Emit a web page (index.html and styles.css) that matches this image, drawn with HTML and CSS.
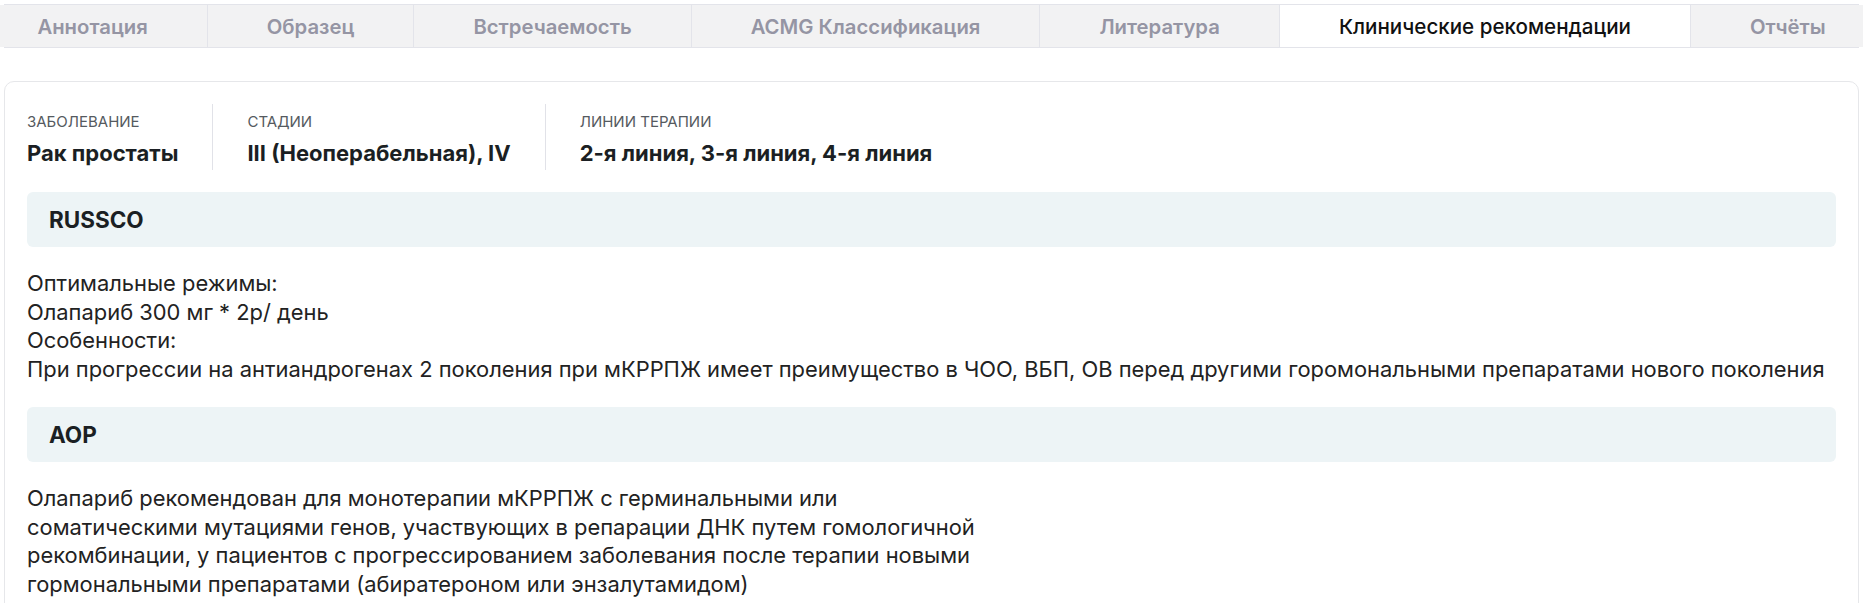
FILE: index.html
```html
<!DOCTYPE html>
<html lang="ru">
<head>
<meta charset="utf-8">
<link rel="stylesheet" href="styles.css">
</head>
<body>
<nav class="tabs">
  <div class="tab">Аннотация</div>
  <div class="tab">Образец</div>
  <div class="tab">Встречаемость</div>
  <div class="tab">ACMG Классификация</div>
  <div class="tab">Литература</div>
  <div class="tab active">Клинические рекомендации</div>
  <div class="tab">Отчёты</div>
</nav>
<main class="card">
  <div class="summary">
    <div class="field">
      <div class="label">Заболевание</div>
      <div class="value">Рак простаты</div>
    </div>
    <div class="field">
      <div class="label">Стадии</div>
      <div class="value">III (Неоперабельная), IV</div>
    </div>
    <div class="field">
      <div class="label">Линии терапии</div>
      <div class="value">2-я линия, 3-я линия, 4-я линия</div>
    </div>
  </div>
  <section class="guide">
    <h2 class="guide-title">RUSSCO</h2>
    <div class="guide-text">Оптимальные режимы:<br>Олапариб 300 мг * 2р/ день<br>Особенности:<br>При прогрессии на антиандрогенах 2 поколения при мКРРПЖ имеет преимущество в ЧОО, ВБП, ОВ перед другими горомональными препаратами нового поколения</div>
  </section>
  <section class="guide">
    <h2 class="guide-title">AOP</h2>
    <div class="guide-text narrow">Олапариб рекомендован для монотерапии мКРРПЖ с герминальными или соматическими мутациями генов, участвующих в репарации ДНК путем гомологичной рекомбинации, у пациентов с прогрессированием заболевания после терапии новыми гормональными препаратами (абиратероном или энзалутамидом)</div>
  </section>
</main>
</body>
</html>
```

FILE: styles.css
```css
* { box-sizing: border-box; }
html, body { margin: 0; padding: 0; }
body {
  padding: 4px;
  font-family: Inter, "Noto Sans", sans-serif;
  color: #1f2328;
  background: #fff;
  overflow: hidden;
}
.tabs {
  display: flex;
  justify-content: center;
  height: 44px;
  border-top: 1px solid #e3e4ea;
  border-bottom: 1px solid #e3e4ea;
}
.tab {
  flex: 0 0 auto;
  padding: 0 59px;
  display: flex;
  align-items: center;
  background: #f2f2f3;
  border-left: 1px solid #e3e4ea;
  color: #9595a4;
  font-size: 20.3px;
  font-weight: 600;
  white-space: nowrap;
}
.tab:first-child { border-left: none; }
.tab.active {
  background: #fff;
  color: #111;
  font-weight: 500;
  font-size: 20.6px;
}
.card {
  margin-top: 33px;
  border: 1px solid #e6e7ea;
  border-radius: 10px;
  padding: 22px 22px 40px;
}
.summary {
  display: flex;
  margin-bottom: 22px;
}
.field {
  padding: 9px 34px 0;
  border-left: 1px solid #e1e2e8;
  height: 66px;
  display: flex;
  flex-direction: column;
  gap: 8px;
}
.field:first-child { border-left: none; padding-left: 0; }
.label {
  font-size: 15px;
  text-transform: uppercase;
  color: #555a60;
  line-height: 18px;
}
.value {
  font-size: 22px;
  font-weight: 700;
  line-height: 28px;
  color: #1b1f23;
}
.guide-title {
  margin: 0;
  height: 55px;
  display: flex;
  align-items: center;
  padding: 0 22px;
  background: #edf4f6;
  border-radius: 6px;
  font-size: 22.5px;
  font-weight: 700;
  color: #1b1f23;
}
.guide-text {
  font-size: 21.9px;
  line-height: 28.5px;
  color: #222;
  padding: 22px 0 24px;
}
.guide-text.narrow { max-width: 955px; }
```
